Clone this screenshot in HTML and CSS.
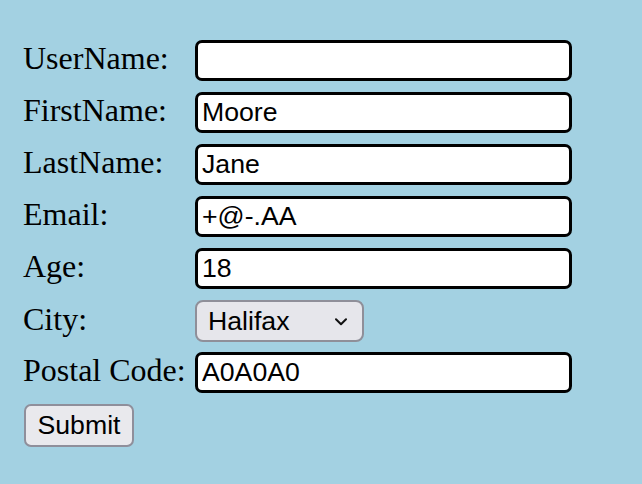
FILE: index.html
```html
<!DOCTYPE html>
<html>
<head>
<meta charset="utf-8">
<link rel="stylesheet" href="styles.css">
</head>
<body>
<form class="form">
  <label class="label">UserName:</label>
  <input class="field" type="text" value="">
  <label class="label">FirstName:</label>
  <input class="field" type="text" value="Moore">
  <label class="label">LastName:</label>
  <input class="field" type="text" value="Jane">
  <label class="label">Email:</label>
  <input class="field" type="text" value="+@-.AA">
  <label class="label">Age:</label>
  <input class="field" type="text" value="18">
  <label class="label">City:</label>
  <div class="select-wrap">
    <select class="select">
      <option>Halifax</option>
    </select>
    <svg class="chevron" width="12" height="8" viewBox="0 0 12 8"><path d="M1 1.2 L6 6.2 L11 1.2" fill="none" stroke="#111" stroke-width="2" stroke-linecap="round" stroke-linejoin="round"/></svg>
  </div>
  <label class="label">Postal Code:</label>
  <input class="field" type="text" value="A0A0A0">
  <div class="actions">
    <button class="submit" type="button">Submit</button>
  </div>
</form>
</body>
</html>
```
FILE: styles.css
```css
html, body {
  margin: 0;
  padding: 0;
  background: #a3d1e2;
}
body {
  width: 642px;
  height: 484px;
  overflow: hidden;
}
.form {
  display: grid;
  grid-template-columns: 172px 377px;
  grid-auto-rows: 52px;
  align-items: baseline;
  padding: 40px 0 0 23px;
}
.label {
  font-family: "Liberation Serif", "Times New Roman", serif;
  font-size: 32px;
  color: #000;
  white-space: nowrap;
}
.field {
  box-sizing: border-box;
  width: 377px;
  height: 41px;
  margin: 0;
  border: 3px solid #000;
  border-radius: 7px;
  background: #fff;
  padding: 0 4px;
  font-family: "Liberation Sans", Arial, sans-serif;
  font-size: 26.67px;
  color: #000;
  outline: none;
}
.select-wrap {
  position: relative;
  width: 169px;
  height: 42px;
}
.select {
  -webkit-appearance: none;
  appearance: none;
  box-sizing: border-box;
  width: 169px;
  height: 42px;
  margin: 0;
  border: 2px solid #8f8f99;
  border-radius: 8px;
  background: #e6e6eb;
  padding: 0 0 0 11px;
  font-family: "Liberation Sans", Arial, sans-serif;
  font-size: 26.67px;
  color: #000;
}
.chevron {
  position: absolute;
  left: 140px;
  top: 18px;
  pointer-events: none;
}
.actions {
  grid-column: 1 / span 2;
  padding-left: 1px;
}
.submit {
  box-sizing: border-box;
  width: 110px;
  height: 43px;
  margin: 0;
  border: 2px solid #8f8f9b;
  border-radius: 7px;
  background: #e9e9ed;
  padding: 0;
  font-family: "Liberation Sans", Arial, sans-serif;
  font-size: 26.67px;
  color: #000;
}
```
